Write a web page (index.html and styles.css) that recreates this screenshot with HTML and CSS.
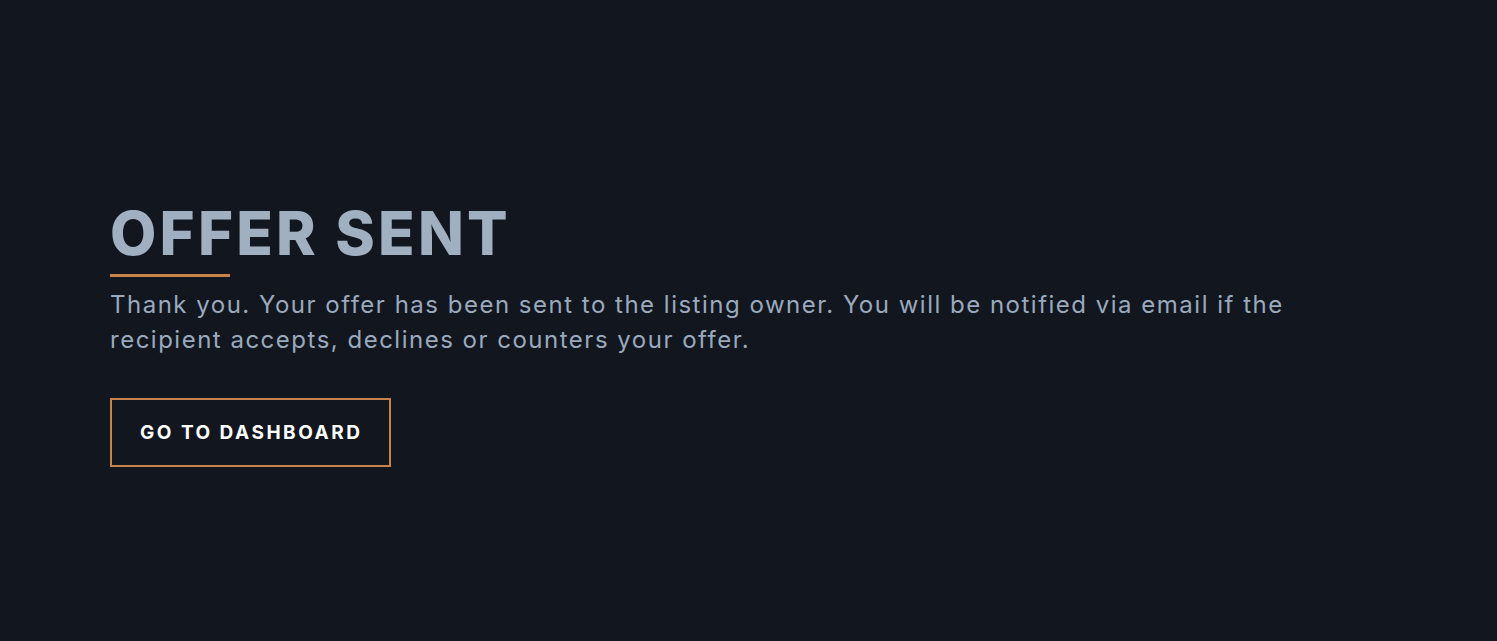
FILE: index.html
```html
<!DOCTYPE html>
<html lang="en">
<head>
    <meta charset="UTF-8">
    <meta name="viewport" content="width=device-width, initial-scale=1.0">
    <title>Offer Sent</title>
    <link rel="stylesheet" href="styles.css">
</head>
<body>
    <div class="container">
        <h1>Offer Sent</h1>
        <div class="rule"></div>
        <p class="message">Thank you. Your offer has been sent to the listing owner. You will be notified via email if the recipient accepts, declines or counters your offer.</p>
        <a class="btn" href="#">Go to Dashboard</a>
    </div>
</body>
</html>
```

FILE: styles.css
```css
body {
    font-family: "Inter", Arial, sans-serif;
    margin: 0;
    padding: 0;
    background-color: #12161f;
    color: #9cafc2;
    min-height: 100vh;
}

.container {
    padding: 196px 110px 0 110px;
    max-width: 1200px;
}

h1 {
    margin: 0;
    font-size: 60px;
    font-weight: 800;
    line-height: 74px;
    letter-spacing: 3.2px;
    text-transform: uppercase;
    color: #a0b0c0;
}

.rule {
    width: 120px;
    height: 3px;
    background-color: #c8834a;
    margin-top: 4px;
}

.message {
    margin: 10px 0 0 0;
    font-size: 24px;
    line-height: 35px;
    letter-spacing: 1.5px;
    color: #9aaabe;
}

.btn {
    display: inline-block;
    margin-top: 41px;
    padding: 0 27px 0 28px;
    height: 65px;
    line-height: 65px;
    border: 2px solid #c8834a;
    color: #ffffff;
    font-size: 19px;
    font-weight: 700;
    letter-spacing: 2.5px;
    text-transform: uppercase;
    text-decoration: none;
}
```
